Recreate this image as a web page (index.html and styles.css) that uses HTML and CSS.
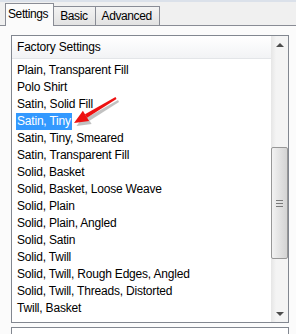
FILE: index.html
```html
<!DOCTYPE html>
<html lang="en">

<head>
  <meta charset="UTF-8">
  <meta name="viewport" content="width=device-width, initial-scale=1.0">
  <title>Settings</title>
  <link rel="stylesheet" href="styles.css">
</head>

<body>
  <div class="top-line"></div>
  <ul class="tabs">
    <li class="tab active">Settings</li>
    <li class="tab">Basic</li>
    <li class="tab">Advanced</li>
  </ul>

  <div class="page">
    <div class="listbox">
      <div class="list-main">
        <div class="list-head">Factory Settings</div>
        <ul class="items">
          <li><span>Plain, Transparent Fill</span></li>
          <li><span>Polo Shirt</span></li>
          <li><span>Satin, Solid Fill</span></li>
          <li class="selected"><span>Satin, Tiny</span></li>
          <li><span>Satin, Tiny, Smeared</span></li>
          <li><span>Satin, Transparent Fill</span></li>
          <li><span>Solid, Basket</span></li>
          <li><span>Solid, Basket, Loose Weave</span></li>
          <li><span>Solid, Plain</span></li>
          <li><span>Solid, Plain, Angled</span></li>
          <li><span>Solid, Satin</span></li>
          <li><span>Solid, Twill</span></li>
          <li><span>Solid, Twill, Rough Edges, Angled</span></li>
          <li><span>Solid, Twill, Threads, Distorted</span></li>
          <li><span>Twill, Basket</span></li>
        </ul>
      </div>
      <div class="scrollbar">
        <div class="arrow up"></div>
        <div class="track">
          <div class="thumb">
            <div class="grip"></div>
          </div>
        </div>
        <div class="arrow down"></div>
      </div>

      <!-- callout arrow over the list -->
      <svg class="pointer" width="64" height="44" viewBox="0 0 64 44">
        <g fill="#777" opacity="0.45" transform="translate(2.5 3)">
          <polygon points="25,26.7 23,23.3 53.5,6.1 54.5,7.9"/>
          <polygon points="12,32 27.1,30.1 20.9,19.7"/>
        </g>
        <g fill="#ee1111">
          <polygon points="25,26.7 23,23.3 53.5,6.1 54.5,7.9"/>
          <polygon points="12,32 27.1,30.1 20.9,19.7"/>
        </g>
      </svg>
    </div>

    <div class="listbox second"></div>
  </div>
</body>

</html>
```

FILE: styles.css
```css
* {
  margin: 0;
  padding: 0;
  box-sizing: border-box;
}

body {
  width: 296px;
  height: 334px;
  overflow: hidden;
  background-color: #fbfbfb;
  font-family: "Liberation Sans", Arial, sans-serif;
  font-size: 11px;
  color: #000;
}

li {
  list-style: none;
}

.top-line {
  height: 2px;
  background-color: #dbe1ea;
}

.tabs {
  display: flex;
  align-items: flex-end;
  height: 24px;
  padding-left: 5px;
  background-color: #f0f0f0;
  border-bottom: 1px solid #898c95;
}

.tab {
  height: 19px;
  padding: 0 7px 0 6px;
  line-height: 18px;
  font-size: 12px;
  letter-spacing: -0.4px;
  border: 1px solid #898c95;
  border-bottom: none;
  border-left: none;
  background: linear-gradient(#f3f3f3, #e2e2e2);
}

.tab.active {
  height: 23px;
  margin-bottom: -1px;
  padding: 0 5px 0 2px;
  line-height: 20px;
  border-left: 1px solid #898c95;
  background: #fbfbfb;
}

.page {
  padding: 9px 7px 0 11px;
}

.listbox {
  position: relative;
  display: flex;
  height: 288px;
  border: 1px solid #828790;
  background-color: #fff;
}

.list-main {
  flex: 1;
  overflow: hidden;
}

.list-head {
  height: 23px;
  padding-left: 5px;
  line-height: 22px;
  font-size: 12px;
  letter-spacing: -0.2px;
  border-bottom: 1px solid #e3e5e8;
  background: linear-gradient(#ffffff, #f2f3f5);
}

.items {
  padding-top: 3px;
}

.items li {
  height: 17px;
  line-height: 17px;
  padding-left: 4px;
  font-size: 12px;
  letter-spacing: -0.2px;
  white-space: nowrap;
}

.items span {
  display: inline-block;
  padding: 0 1px;
}

.items .selected span {
  background-color: #3399ff;
  color: #fff;
}

.scrollbar {
  display: flex;
  flex-direction: column;
  width: 17px;
  background: linear-gradient(90deg, #e6e6e6, #f4f4f4 30%, #f4f4f4);
}

.arrow {
  height: 17px;
  display: flex;
  align-items: center;
  justify-content: center;
}

.arrow::after {
  content: "";
  border-left: 4px solid transparent;
  border-right: 4px solid transparent;
}

.arrow.up::after {
  border-bottom: 4px solid #4d4d4d;
}

.arrow.down::after {
  border-top: 4px solid #4d4d4d;
}

.track {
  flex: 1;
  padding-top: 94px;
}

.thumb {
  height: 112px;
  display: flex;
  align-items: center;
  justify-content: center;
  border: 1px solid #979797;
  border-radius: 2px;
  background: linear-gradient(90deg, #f2f2f2, #e4e4e4 45%, #d4d4d4);
}

.grip {
  width: 7px;
  height: 7px;
  border-top: 1px solid #7a7a7a;
  border-bottom: 1px solid #7a7a7a;
  position: relative;
}

.grip::after {
  content: "";
  position: absolute;
  left: 0;
  right: 0;
  top: 2px;
  height: 1px;
  background-color: #7a7a7a;
}

.pointer {
  position: absolute;
  left: 50px;
  top: 55px;
}

.listbox.second {
  margin-top: 4px;
  height: 20px;
}
```
